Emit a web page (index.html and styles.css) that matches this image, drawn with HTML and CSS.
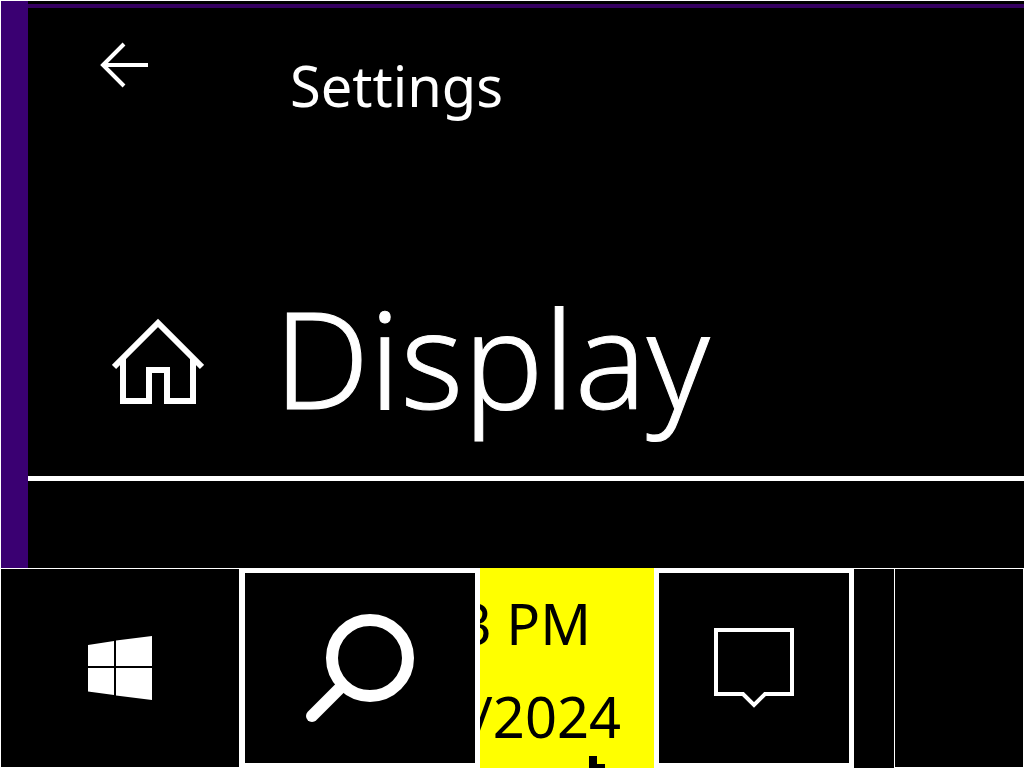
FILE: index.html
```html
<!DOCTYPE html>
<html lang="en">
<head>
<meta charset="utf-8">
<title>Settings</title>
<link rel="stylesheet" href="styles.css">
</head>
<body>
<div class="desktop">
  <main class="window">
    <header class="titlebar">
      <button class="icon-button back" aria-label="Back">
        <svg width="50" height="46" viewBox="0 0 50 46" fill="none" stroke="currentColor" stroke-width="4"><path d="M25 2 4 23 25 44M3 23H49"/></svg>
      </button>
      <span class="app-name">Settings</span>
    </header>
    <div class="page-head">
      <button class="icon-button home" aria-label="Home">
        <svg width="92" height="88" viewBox="0 0 92 88" fill="none" stroke="currentColor" stroke-width="6"><path d="M2 50 46 6 90 50"/><path d="M11 41V84H37V53H55V84H81V41"/></svg>
      </button>
      <h1 class="page-title">Display</h1>
    </div>
    <section class="content"></section>
  </main>
  <footer class="taskbar">
    <button class="cell start" aria-label="Start">
      <svg width="64" height="64" viewBox="0 0 64 64" fill="currentColor"><path d="M0 9 26 5V30H0zM28 4.500 64 0V30H28zM0 32H26V59L0 55.500zM28 32H64V64L28 59.500z"/></svg>
    </button>
    <button class="cell boxed search" aria-label="Search">
      <svg width="110" height="110" viewBox="0 0 110 110" fill="none" stroke="currentColor" stroke-width="12"><circle cx="65" cy="45" r="38"/><path d="M37 73 7 103" stroke-linecap="round"/></svg>
    </button>
    <button class="clock">
      <span class="time">3 PM</span>
      <span class="date">/2024</span>
      <svg class="pointer" width="16" height="12" viewBox="0 0 16 12"><path d="M0 0H8V8H16V12H0z"/></svg>
    </button>
    <button class="cell boxed notifications" aria-label="Notifications">
      <svg width="80" height="80" viewBox="0 0 80 80" fill="none" stroke="currentColor" stroke-width="4"><path d="M2 2H78V66H51L40 77 29 66H2z"/></svg>
    </button>
    <div class="spacer"></div>
    <button class="cell show-desktop" aria-label="Show desktop"></button>
  </footer>
</div>
</body>
</html>
```
FILE: styles.css
```css
* { box-sizing: border-box; }
body { margin: 0; background: #000; color: #fff; font-family: "Noto Sans", "Open Sans", sans-serif; }
button { margin: 0; padding: 0; border: 0; border-radius: 0; background: #000; color: inherit; font: inherit; }
svg { display: block; }

.desktop {
  display: flex;
  flex-direction: column;
  min-height: 100vh;
  border-top: 1px solid #fff;
  background: #000;
}
.window {
  flex: 1;
  display: flex;
  flex-direction: column;
  position: relative;
  border-left: 28px solid #3a0072;
  box-shadow: inset 0 3px #000, inset 0 7px #350060;
}
.desktop::before {
  content: "";
  position: absolute;
  z-index: 1;
  top: 0;
  bottom: 200px;
  left: 0;
  border-left: 1px solid #fff;
}
.titlebar { display: flex; align-items: flex-start; height: 235px; padding: 41px 0 0 71px; }
.app-name { margin-left: 141px; font-size: 56px; line-height: 86px; }
.page-head {
  display: flex;
  align-items: center;
  height: 245px;
  padding: 10px 0 0 84px;
  border-bottom: 5px solid #fff;
}
.page-title {
  margin: 0 0 8px 70px;
  font-size: 134px;
  font-weight: 300;
  line-height: 200px;
  -webkit-text-stroke: 1px currentColor;
}
.content { flex: 1; }

.taskbar { display: flex; height: 200px; }
.cell { display: flex; align-items: center; justify-content: center; border: 1px solid #fff; }
.boxed { border-width: 5px; }
.start { width: 240px; }
.search { width: 240px; }
.clock {
  position: relative;
  display: flex;
  flex-direction: column;
  align-items: flex-end;
  width: 174px;
  padding: 9px 33px 0 0;
  overflow: hidden;
  background: #ff0;
  color: #000;
  font-size: 56px;
  line-height: 93px;
  white-space: nowrap;
}
.time { padding-right: 30px; }
.pointer { position: absolute; right: 49px; bottom: 0; }
.notifications { width: 200px; }
.spacer { width: 40px; border-top: 1px solid #fff; }
.show-desktop { flex: 1; }
```
